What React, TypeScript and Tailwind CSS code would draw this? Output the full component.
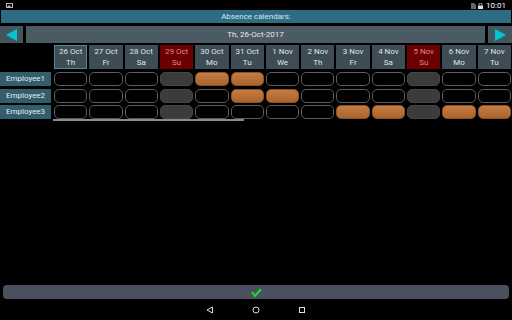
import React from "react";

type C = "e" | "w" | "o";
const days = [
  ["26 Oct", "Th"], ["27 Oct", "Fr"], ["28 Oct", "Sa"], ["29 Oct", "Su"], ["30 Oct", "Mo"],
  ["31 Oct", "Tu"], ["1 Nov", "We"], ["2 Nov", "Th"], ["3 Nov", "Fr"], ["4 Nov", "Sa"],
  ["5 Nov", "Su"], ["6 Nov", "Mo"], ["7 Nov", "Tu"],
];
const rows: { name: string; cells: C[] }[] = [
  { name: "Employee1", cells: ["e","e","e","w","o","o","e","e","e","e","w","e","e"] },
  { name: "Employee2", cells: ["e","e","e","w","e","o","o","e","e","e","w","e","e"] },
  { name: "Employee3", cells: ["e","e","e","w","e","e","e","e","o","o","w","o","o"] },
];

function Cell({ t }: { t: C }) {
  if (t === "w") return <div className="h-full rounded-[5px] bg-[#3b3b3b] border border-[#454545]" />;
  if (t === "o") return <div className="h-full rounded-[5px] bg-gradient-to-b from-[#c47c42] to-[#a9642d] border border-[#8a5226]" />;
  return <div className="h-full rounded-[5px] bg-black border border-[#5c5c5c]" />;
}

export default function App() {
  return (
    <div className="w-[512px] h-[320px] bg-black flex flex-col overflow-hidden" style={{ fontFamily: "Roboto, 'Liberation Sans', sans-serif" }}>
      {/* status bar */}
      <div className="h-[10px] flex items-center justify-between px-[6px] text-[8px] text-white">
        <svg width="7" height="6" viewBox="0 0 7 6" className="mt-[1px]">
          <rect x="0.5" y="0.5" width="6" height="4" fill="none" stroke="#bbb" strokeWidth="1" />
          <path d="M1 4 L3 2 L5 4Z" fill="#bbb" />
        </svg>
        <div className="flex items-center gap-[2px] pt-[1px]">
          <svg width="5" height="6" viewBox="0 0 5 6"><path d="M0 0H3L5 2V6H0Z" fill="#666" /></svg>
          <svg width="5" height="6" viewBox="0 0 5 6"><rect x="0" y="2.5" width="5" height="3.5" fill="#ddd" /><path d="M1 2.5V1.5A1.5 1.5 0 0 1 4 1.5V2.5" fill="none" stroke="#ddd" strokeWidth="0.8" /></svg>
          <span className="leading-none ml-[1px]">10:01</span>
        </div>
      </div>
      {/* title */}
      <div className="mx-[1px] h-[13px] bg-[#2e6c84] flex items-center justify-center text-[8px] text-[#dce6ea]">Absence calendars:</div>
      {/* nav row */}
      <div className="mt-[3px] h-[17px] flex gap-[2px]">
        <div className="w-[23px] bg-[#45555d] flex items-center justify-center">
          <svg width="12" height="12" viewBox="0 0 12 12"><path d="M0 6 L11 0 V12Z" fill="#00c4d4" /></svg>
        </div>
        <div className="flex-1 mx-[1px] bg-[#4a5b63] flex items-center justify-center text-[8px] text-[#e6ecee]">Th, 26-Oct-2017</div>
        <div className="w-[24px] bg-[#45555d] flex items-center justify-center">
          <svg width="12" height="12" viewBox="0 0 12 12"><path d="M12 6 L1 0 V12Z" fill="#00c4d4" /></svg>
        </div>
      </div>
      {/* header */}
      <div className="mt-[2px] flex pr-[1px]">
        <div className="w-[54px] shrink-0" />
        <div className="flex-1 grid grid-cols-[repeat(13,minmax(0,1fr))] gap-x-[2px]">
          {days.map(([d, w], i) => {
            const sun = w === "Su";
            const sel = i === 0;
            return (
              <div key={i} className={`h-[24px] flex flex-col items-center justify-center text-[8px] leading-[11px] ${sun ? "bg-[#6c0000] text-[#d88a8a]" : "bg-[#3e4c55] text-[#dfe6ea]"} ${sel ? "border border-[#4a8e98]" : ""}`}>
                <span>{d}</span>
                <span>{w}</span>
              </div>
            );
          })}
        </div>
      </div>
      {/* rows */}
      <div className="mt-[3px] flex flex-col gap-y-[2.5px]">
        {rows.map((r) => (
          <div key={r.name} className="flex h-[14px] pr-[1px]">
            <div className="w-[51px] shrink-0 mr-[3px] bg-[#325e6c] flex items-center justify-center text-[8px] text-[#e4ecee]">{r.name}</div>
            <div className="flex-1 grid grid-cols-[repeat(13,minmax(0,1fr))] gap-x-[2px]">
              {r.cells.map((c, i) => <Cell key={i} t={c} />)}
            </div>
          </div>
        ))}
      </div>
      <div className="ml-[53px] mt-[0px] w-[191px] h-[1.5px] bg-[#8a8a8a]" />
      <div className="flex-1" />
      {/* bottom button */}
      <div className="mx-[3px] h-[14px] rounded-[4px] bg-[#4a5060] flex items-center justify-center">
        <svg width="11" height="9" viewBox="0 0 11 9"><path d="M1 4 L4 8 L10 1" fill="none" stroke="#1ee01e" strokeWidth="2" /></svg>
      </div>
      {/* nav bar */}
      <div className="h-[21px] flex items-center justify-center gap-[38px]">
        <svg width="8" height="8" viewBox="0 0 8 8"><path d="M1 4 L6.5 1 V7Z" fill="none" stroke="#ddd" strokeWidth="1" /></svg>
        <svg width="8" height="8" viewBox="0 0 8 8"><circle cx="4" cy="4" r="3" fill="none" stroke="#ddd" strokeWidth="1" /></svg>
        <svg width="8" height="8" viewBox="0 0 8 8"><rect x="1.5" y="1.5" width="5" height="5" fill="none" stroke="#ddd" strokeWidth="1" /></svg>
      </div>
    </div>
  );
}
